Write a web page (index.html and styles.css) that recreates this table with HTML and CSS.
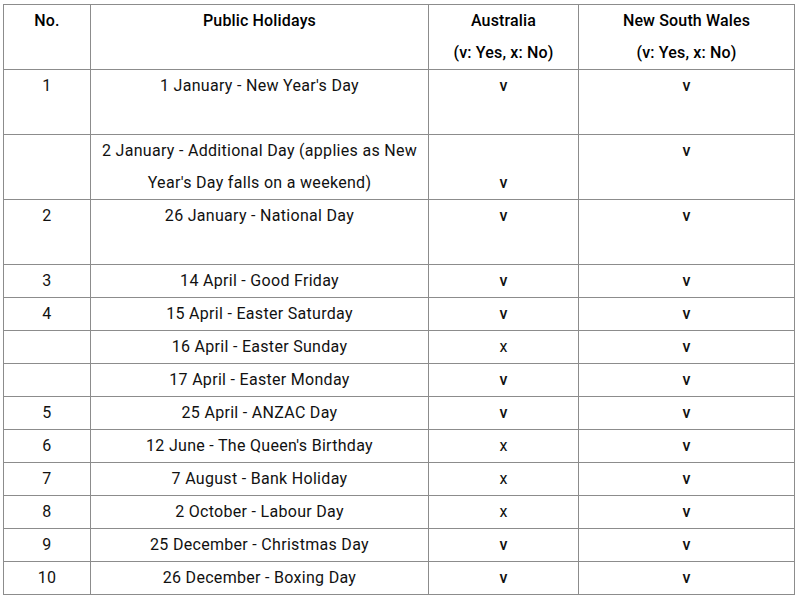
FILE: index.html
```html
<!DOCTYPE html>
<html lang="en">
<head>
<meta charset="utf-8">
<title>Public Holidays</title>
<link rel="stylesheet" href="styles.css">
</head>
<body>
<table class="holidays">
  <colgroup>
    <col class="c-no">
    <col class="c-name">
    <col class="c-au">
    <col class="c-nsw">
  </colgroup>
  <thead>
    <tr>
      <th>No.<br>&nbsp;</th>
      <th>Public Holidays<br>&nbsp;</th>
      <th>Australia<br>(v: Yes, x: No)</th>
      <th>New South Wales<br>(v: Yes, x: No)</th>
    </tr>
  </thead>
  <tbody>
    <tr><td>1</td><td>1 January - New Year's Day<br>&nbsp;</td><td class="yes">v</td><td class="yes">v</td></tr>
    <tr><td></td><td>2 January - Additional Day (applies as New Year's Day falls on a weekend)</td><td class="yes">&nbsp;<br>v</td><td class="yes">v</td></tr>
    <tr><td>2</td><td>26 January - National Day<br>&nbsp;</td><td class="yes">v</td><td class="yes">v</td></tr>
    <tr><td>3</td><td>14 April - Good Friday</td><td class="yes">v</td><td class="yes">v</td></tr>
    <tr><td>4</td><td>15 April - Easter Saturday</td><td class="yes">v</td><td class="yes">v</td></tr>
    <tr><td></td><td>16 April - Easter Sunday</td><td>x</td><td class="yes">v</td></tr>
    <tr><td></td><td>17 April - Easter Monday</td><td class="yes">v</td><td class="yes">v</td></tr>
    <tr><td>5</td><td>25 April - ANZAC Day</td><td class="yes">v</td><td class="yes">v</td></tr>
    <tr><td>6</td><td>12 June - The Queen's Birthday</td><td>x</td><td class="yes">v</td></tr>
    <tr><td>7</td><td>7 August - Bank Holiday</td><td>x</td><td class="yes">v</td></tr>
    <tr><td>8</td><td>2 October - Labour Day</td><td>x</td><td class="yes">v</td></tr>
    <tr><td>9</td><td>25 December - Christmas Day</td><td class="yes">v</td><td class="yes">v</td></tr>
    <tr><td>10</td><td>26 December - Boxing Day</td><td class="yes">v</td><td class="yes">v</td></tr>
  </tbody>
</table>
</body>
</html>
```
FILE: styles.css
```css
html, body {
  margin: 0;
  padding: 0;
  background: #ffffff;
}

body {
  padding: 4px 0 0 3px;
  font-family: Roboto, "Liberation Sans", sans-serif;
  font-size: 16px;
  line-height: 32px;
  color: #111111;
}

.holidays {
  border-collapse: collapse;
  table-layout: fixed;
  width: 791px;
  border: 1px solid #333333;
}

.c-no { width: 87px; }
.c-name { width: 338px; }
.c-au { width: 150px; }
.c-nsw { width: 216px; }

.holidays th,
.holidays td {
  border: 1px solid #8c8c8c;
  padding: 0 6px;
  text-align: center;
  vertical-align: top;
}

.holidays td {
  letter-spacing: 0.3px;
}

.holidays th {
  font-weight: 500;
  letter-spacing: 0.15px;
  color: #000000;
}

.holidays td.yes {
  font-weight: 500;
}
```
